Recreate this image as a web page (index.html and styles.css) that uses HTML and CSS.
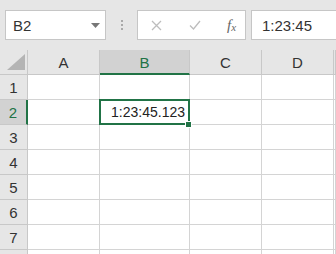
FILE: index.html
```html
<!DOCTYPE html>
<html>
<head>
<meta charset="utf-8">
<link rel="stylesheet" href="styles.css">
</head>
<body>
<div class="toolbar">
  <div class="namebox">
    <span class="name">B2</span>
    <svg class="caret" width="9" height="5" viewBox="0 0 9 5"><path d="M0 0H9L4.5 5Z" fill="#777"/></svg>
  </div>
  <div class="dots"><i></i><i></i><i></i></div>
  <div class="buttons">
    <svg class="btn" width="11" height="11" viewBox="0 0 11 11"><path d="M1 1L10 10M10 1L1 10" stroke="#bdbdbd" stroke-width="1.3" fill="none"/></svg>
    <svg class="btn" width="12" height="10" viewBox="0 0 12 10"><path d="M1 5.5L4.5 9L11 1" stroke="#bdbdbd" stroke-width="1.3" fill="none"/></svg>
    <span class="fx">f<sub>x</sub></span>
  </div>
  <div class="formula">1:23:45</div>
</div>
<div class="sheet">
  <div class="corner"><svg width="18" height="16" viewBox="0 0 18 16"><path d="M18 0V16H0Z" fill="#b4b4b4"/></svg></div>
  <div class="ch">A</div>
  <div class="ch sel">B</div>
  <div class="ch">C</div>
  <div class="ch">D</div>
  <div class="ch"></div>

  <div class="rh">1</div><div class="c"></div><div class="c"></div><div class="c"></div><div class="c"></div><div class="c"></div>
  <div class="rh sel">2</div><div class="c"></div><div class="c active">1:23:45.123</div><div class="c"></div><div class="c"></div><div class="c"></div>
  <div class="rh">3</div><div class="c"></div><div class="c"></div><div class="c"></div><div class="c"></div><div class="c"></div>
  <div class="rh">4</div><div class="c"></div><div class="c"></div><div class="c"></div><div class="c"></div><div class="c"></div>
  <div class="rh">5</div><div class="c"></div><div class="c"></div><div class="c"></div><div class="c"></div><div class="c"></div>
  <div class="rh">6</div><div class="c"></div><div class="c"></div><div class="c"></div><div class="c"></div><div class="c"></div>
  <div class="rh">7</div><div class="c"></div><div class="c"></div><div class="c"></div><div class="c"></div><div class="c"></div>
  <div class="rh"></div><div class="c"></div><div class="c"></div><div class="c"></div><div class="c"></div><div class="c"></div>
</div>
</body>
</html>
```
FILE: styles.css
```css
html, body {
  margin: 0;
  padding: 0;
  background: #fff;
  overflow: hidden;
  width: 336px;
  height: 254px;
}
body {
  font-family: "Liberation Sans", Arial, sans-serif;
  color: #222;
}
.toolbar {
  height: 50px;
  box-sizing: border-box;
  background: #e6e6e6;
  padding: 10px 0 0 5px;
  display: flex;
  align-items: flex-start;
}
.namebox {
  width: 101px;
  height: 30px;
  box-sizing: border-box;
  background: #fff;
  border: 1px solid #c6c6c6;
  display: flex;
  align-items: center;
  padding: 0 5px 0 7px;
  font-size: 15px;
}
.name { flex: 1; color: #333; }
.caret { margin-top: 1px; }
.dots {
  width: 31px;
  height: 30px;
  display: flex;
  flex-direction: column;
  align-items: center;
  justify-content: center;
  gap: 2px;
  padding-left: 1px;
  box-sizing: border-box;
}
.dots i {
  display: block;
  width: 2px;
  height: 2px;
  background: #a9a9a9;
}
.buttons {
  width: 109px;
  height: 30px;
  box-sizing: border-box;
  background: #fff;
  border: 1px solid #c6c6c6;
  display: flex;
  align-items: center;
  padding: 0 0 0 13px;
}
.buttons .btn:nth-child(2) { margin-left: 27px; }
.fx {
  margin-left: 26px;
  font-family: "Liberation Serif", serif;
  font-style: italic;
  font-size: 15px;
  color: #666;
}
.fx sub { font-size: 11px; vertical-align: -1px; }
.formula {
  margin-left: 5px;
  flex: 1;
  height: 30px;
  box-sizing: border-box;
  background: #fff;
  border: 1px solid #c6c6c6;
  border-right: none;
  display: flex;
  align-items: center;
  padding-left: 10px;
  font-size: 15px;
  color: #333;
}
.sheet {
  display: grid;
  grid-template-columns: 28px 72px 90px 72px 72px 1fr;
  grid-template-rows: 25px repeat(8, 25px);
}
.corner, .ch, .rh {
  background: #e6e6e6;
  border-right: 1px solid #c8c8c8;
  border-bottom: 1px solid #c8c8c8;
  box-sizing: border-box;
  display: flex;
  align-items: center;
  justify-content: center;
  font-size: 15px;
  color: #333;
}
.corner { align-items: flex-end; justify-content: flex-end; padding: 0 2px 4px 0; }
.ch { padding-top: 1px; }
.ch.sel {
  background: #d2d2d2;
  color: #217346;
  border-bottom: 2px solid #217346;
}
.rh.sel {
  background: #d2d2d2;
  color: #217346;
  border-right: 2px solid #217346;
}
.c {
  border-right: 1px solid #d4d4d4;
  border-bottom: 1px solid #d4d4d4;
  box-sizing: border-box;
}
.active {
  position: relative;
  display: flex;
  align-items: center;
  justify-content: flex-end;
  padding-right: 4px;
  font-size: 14px;
  color: #222;
}
.active::after {
  content: "";
  position: absolute;
  left: -1px;
  top: -1px;
  right: -1px;
  bottom: -1px;
  border: 2px solid #217346;
}
.active::before {
  content: "";
  position: absolute;
  right: -3px;
  bottom: -4px;
  width: 5px;
  height: 5px;
  background: #217346;
  border: 1px solid #fff;
  z-index: 1;
}
```
